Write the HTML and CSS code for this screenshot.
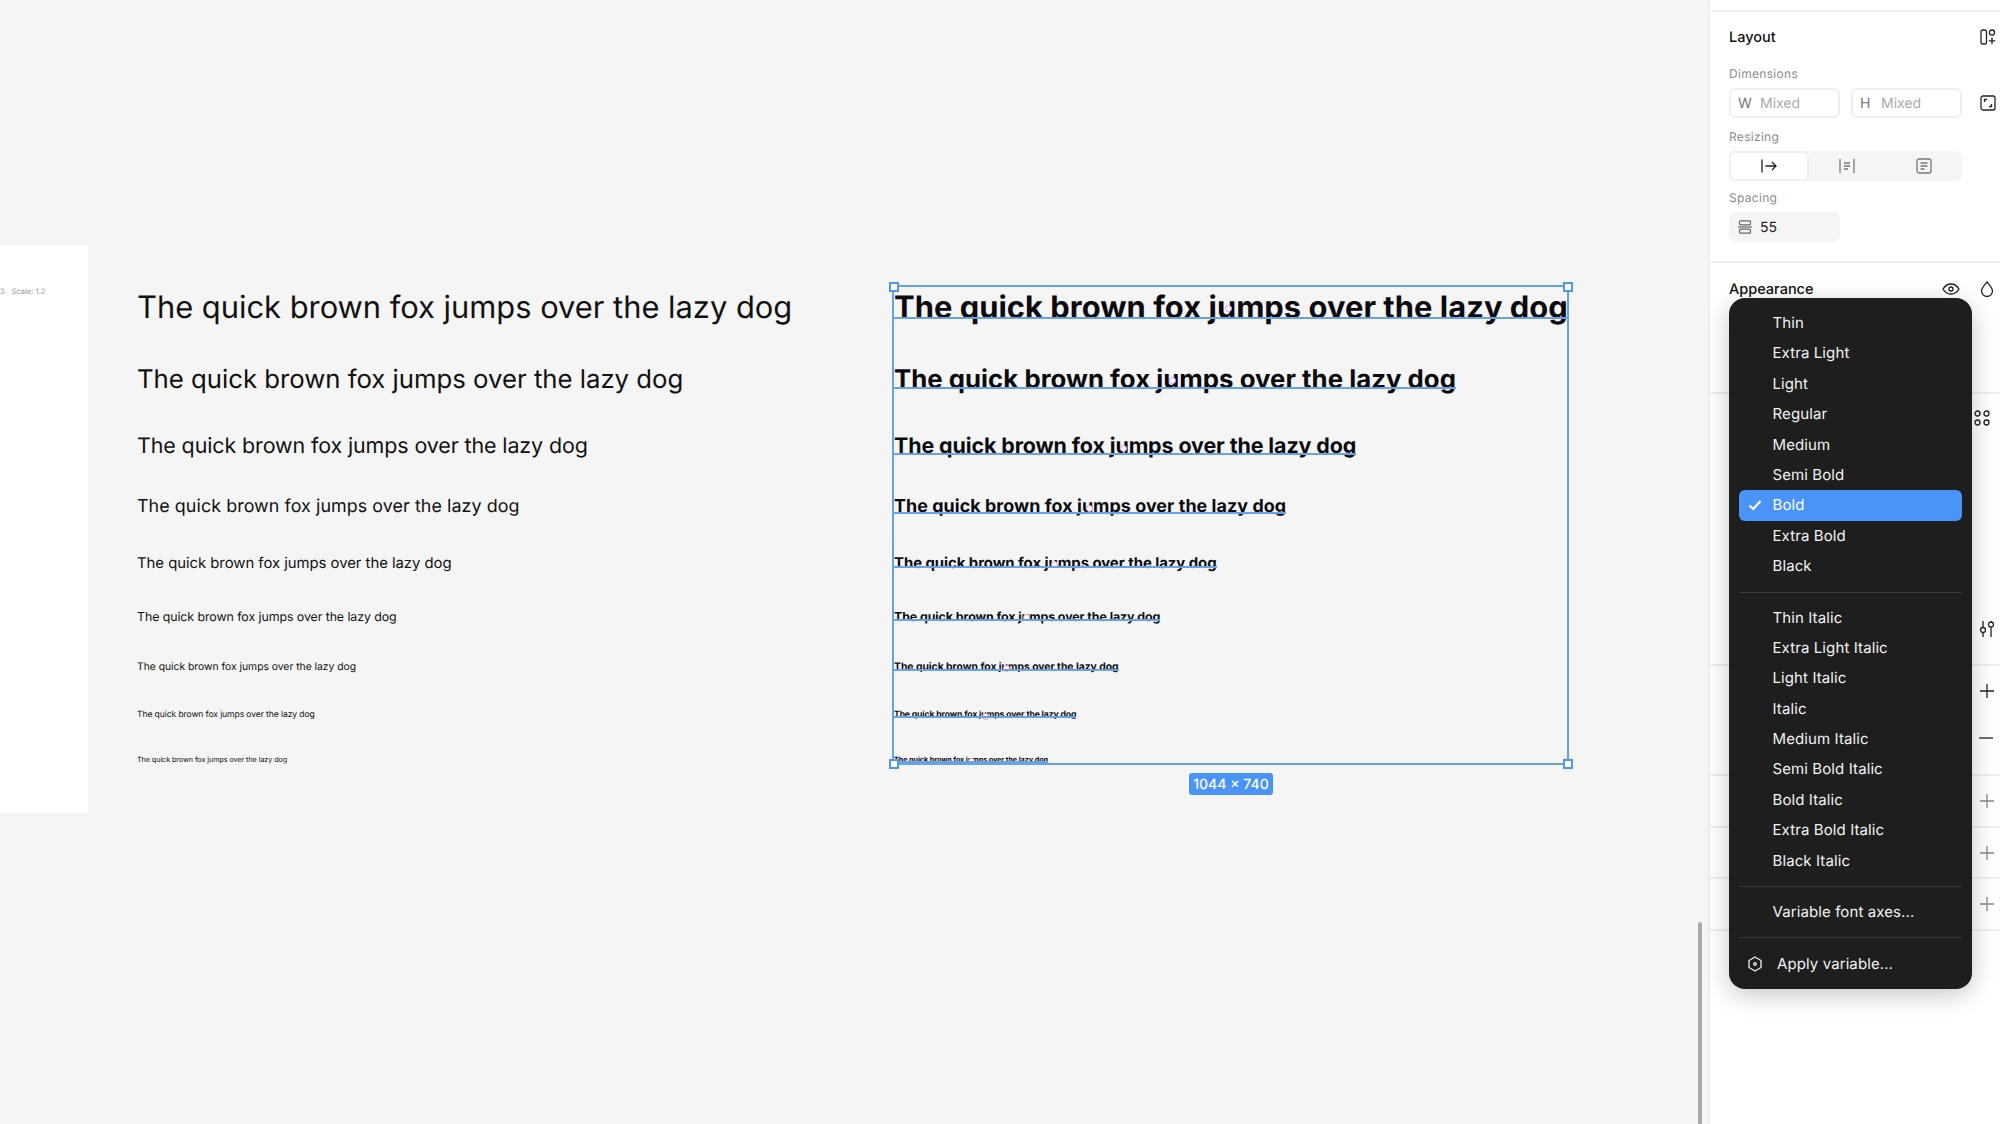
FILE: index.html
```html
<!DOCTYPE html>
<html lang="en">
<head>
<meta charset="utf-8">
<title>Type scale</title>
<link rel="stylesheet" href="styles.css">
</head>
<body>
<div class="app">
  <main class="canvas">
    <div class="frame"><div class="frame-note"><span>3</span><span>Scale: 1.2</span></div></div>
    <div class="stack stack-left">
      <p class="row s1">The quick brown fox jumps over the lazy dog</p>
      <p class="row s2">The quick brown fox jumps over the lazy dog</p>
      <p class="row s3">The quick brown fox jumps over the lazy dog</p>
      <p class="row s4">The quick brown fox jumps over the lazy dog</p>
      <p class="row s5">The quick brown fox jumps over the lazy dog</p>
      <p class="row s6">The quick brown fox jumps over the lazy dog</p>
      <p class="row s7">The quick brown fox jumps over the lazy dog</p>
      <p class="row s8">The quick brown fox jumps over the lazy dog</p>
      <p class="row s9">The quick brown fox jumps over the lazy dog</p>
    </div>
    <div class="stack stack-right">
      <p class="row s1"><span class="sel">The quick brown fox j<span class="dot">u</span>mps over the lazy dog</span></p>
      <p class="row s2"><span class="sel">The quick brown fox j<span class="dot">u</span>mps over the lazy dog</span></p>
      <p class="row s3"><span class="sel">The quick brown fox j<span class="dot">u</span>mps over the lazy dog</span></p>
      <p class="row s4"><span class="sel">The quick brown fox j<span class="dot">u</span>mps over the lazy dog</span></p>
      <p class="row s5"><span class="sel">The quick brown fox j<span class="dot">u</span>mps over the lazy dog</span></p>
      <p class="row s6"><span class="sel">The quick brown fox j<span class="dot">u</span>mps over the lazy dog</span></p>
      <p class="row s7"><span class="sel">The quick brown fox j<span class="dot">u</span>mps over the lazy dog</span></p>
      <p class="row s8"><span class="sel">The quick brown fox j<span class="dot">u</span>mps over the lazy dog</span></p>
      <p class="row s9"><span class="sel">The quick brown fox j<span class="dot">u</span>mps over the lazy dog</span></p>
    </div>
    <div class="selection">
      <i class="handle tl"></i><i class="handle tr"></i><i class="handle bl"></i><i class="handle br"></i>
      <span class="size-label">1044 × 740</span>
    </div>
    <div class="scrollbar"></div>
  </main>

  <aside class="panel">
    <section class="sec sec-top"></section>
    <section class="sec sec-layout">
      <header class="sec-head">
        <h2>Layout</h2>
        <svg class="ic ic-add" viewBox="0 0 16 16"><rect x="1" y="1" width="5.5" height="14" rx="1.6"/><circle cx="12" cy="3.6" r="2.6"/><path d="M12 8.6v6.4M8.8 11.8h6.4"/></svg>
      </header>
      <div class="label first">Dimensions</div>
      <div class="line">
        <div class="field outlined"><span class="pre">W</span><span class="ph">Mixed</span></div>
        <div class="field outlined"><span class="pre pre-h">H</span><span class="ph">Mixed</span></div>
        <svg class="ic ic-fit" viewBox="0 0 16 16"><rect x="1" y="1" width="14" height="14" rx="2"/><path d="M4.5 7V4.5H7M11.5 9v2.5H9"/></svg>
      </div>
      <div class="label">Resizing</div>
      <div class="segments">
        <div class="seg active"><svg viewBox="0 0 16 16"><path d="M1 1.500v13M4.500 8h10.500M11 4l4 4-4 4"/></svg></div>
        <div class="seg"><svg class="muted" viewBox="0 0 16 16"><path d="M1 1v14M15 1v14M5 5h6M5 8h6M5 11h4"/></svg></div>
        <div class="seg"><svg class="muted" viewBox="0 0 16 16"><rect x="1" y="1" width="14" height="14" rx="2"/><path d="M4.500 5h7M4.500 8h7M4.500 11h4"/></svg></div>
      </div>
      <div class="label">Spacing</div>
      <div class="field filled">
        <svg class="ic-space" viewBox="0 0 14 14"><rect x="1.500" y=".8" width="11" height="4" rx="1"/><rect x="1.500" y="9.200" width="11" height="4" rx="1"/><path d="M0 7h14"/></svg>
        <span class="val">55</span>
      </div>
    </section>
    <section class="sec sec-appearance">
      <header class="sec-head appearance-head">
        <h2>Appearance</h2>
        <svg class="ic ic-eye" viewBox="0 0 18 12"><path d="M1 6c2-3.400 4.800-5 8-5s6 1.600 8 5c-2 3.400-4.800 5-8 5S3 9.400 1 6z"/><circle cx="9" cy="6" r="2"/></svg>
        <svg class="ic ic-drop" viewBox="0 0 14 16"><path d="M7 1c2.800 3.400 5.500 6 5.500 9a5.500 5.500 0 0 1-11 0c0-3 2.700-5.600 5.500-9z"/></svg>
      </header>
    </section>
    <section class="sec sec-text">
      <svg class="ic ic-dots" viewBox="0 0 16 16"><circle cx="3.500" cy="3.500" r="2.500"/><circle cx="12.500" cy="3.500" r="2.500"/><circle cx="3.500" cy="12.500" r="2.500"/><circle cx="12.500" cy="12.500" r="2.500"/></svg>
      <svg class="ic ic-sliders" viewBox="0 0 16 16"><path d="M4 0v6.500M4 11.500V16M12 0v1M12 6v10"/><circle cx="4" cy="9" r="2.500"/><circle cx="12" cy="3.500" r="2.500"/></svg>
    </section>
    <section class="sec sec-fill">
      <svg class="ic ic-plus" viewBox="0 0 16 16"><path d="M8 1v14M1 8h14"/></svg>
      <svg class="ic ic-minus" viewBox="0 0 16 16"><path d="M1 8h14"/></svg>
    </section>
    <section class="sec sec-add"><svg class="ic ic-plus gray" viewBox="0 0 16 16"><path d="M8 1v14M1 8h14"/></svg></section>
    <section class="sec sec-add"><svg class="ic ic-plus gray" viewBox="0 0 16 16"><path d="M8 1v14M1 8h14"/></svg></section>
    <section class="sec sec-add"><svg class="ic ic-plus gray" viewBox="0 0 16 16"><path d="M8 1v14M1 8h14"/></svg></section>

    <div class="menu">
      <ul class="group">
        <li>Thin</li><li>Extra Light</li><li>Light</li><li>Regular</li><li>Medium</li><li>Semi Bold</li>
        <li class="on"><svg class="check" viewBox="0 0 14 12"><path d="M1.500 6.500l3.700 3.500L12.500 2"/></svg>Bold</li>
        <li>Extra Bold</li><li>Black</li>
      </ul>
      <ul class="group">
        <li>Thin Italic</li><li>Extra Light Italic</li><li>Light Italic</li><li>Italic</li><li>Medium Italic</li><li>Semi Bold Italic</li><li>Bold Italic</li><li>Extra Bold Italic</li><li>Black Italic</li>
      </ul>
      <ul class="group"><li>Variable font axes...</li></ul>
      <ul class="group">
        <li class="apply"><svg class="hex" viewBox="0 0 14 16"><path d="M7 1l6 3.500v7L7 15l-6-3.500v-7z"/><circle cx="7" cy="8" r="1.300"/></svg>Apply variable...</li>
      </ul>
    </div>
  </aside>
</div>
</body>
</html>
```

FILE: styles.css
```css
* { box-sizing: border-box; }
html, body { margin: 0; height: 100%; overflow: hidden; }
body { font-family: Inter, "Liberation Sans", sans-serif; color: #111; background: #f5f5f5; text-rendering: geometricPrecision; }
ul, p, h2 { margin: 0; padding: 0; }
ul { list-style: none; }

.app { display: flex; width: 2000px; height: 1124px; }

/* canvas */
.canvas { position: relative; flex: 0 0 1708px; background: #f5f5f5; overflow: hidden; }
.frame { position: absolute; left: 0; top: 245px; width: 88px; height: 568px; background: #fff; }
.frame-note { display: flex; gap: 7px; margin-top: 42px; font-size: 7.500px; color: #999; white-space: nowrap; }

.stack { position: absolute; top: 288.500px; display: flex; flex-direction: column; gap: 37px; }
.stack-left { left: 137px; }
.stack-right { left: 894px; font-weight: 700; }
.row { white-space: nowrap; color: #111; line-height: 1.21; }
.stack-right .row { color: #0b0b0f; }
.s1 { font-size: 30.900px; letter-spacing: -.02px; margin-bottom: 1px; }
.s2 { font-size: 25.750px; letter-spacing: -.015px; margin-bottom: 2px; }
.s3 { font-size: 21.450px; letter-spacing: -.106px; margin-bottom: -1px; }
.s4 { font-size: 17.880px; letter-spacing: .076px; margin-bottom: -1px; }
.s5 { font-size: 14.900px; letter-spacing: -.04px; }
.s6 { font-size: 12.420px; letter-spacing: -.09px; }
.s7 { font-size: 10.350px; letter-spacing: -.015px; margin-bottom: -.5px; }
.s8 { font-size: 8.620px; letter-spacing: -.121px; margin-bottom: -1px; }
.s9 { font-size: 7.180px; letter-spacing: -.05px; }
.stack-right .s1, .stack-right .s2 { letter-spacing: .03px; }

.sel { position: relative; display: inline-block; }
.sel::after { content: ""; position: absolute; left: -1px; right: 0; bottom: .22em; height: 2px; background: #66a3e6; }
.dot { position: relative; display: inline-block; }
.dot::after { content: ""; position: absolute; left: 50%; top: 50%; width: 5px; height: 5px; margin: -2px 0 0 -2px; border-radius: 50%; background: #fff; border: 1px solid #ea8fd0; }

.selection { position: absolute; left: 892px; top: 285px; width: 677px; height: 480px; border: 2px solid #66a3e6; pointer-events: none; }
.handle { position: absolute; width: 10px; height: 10px; background: #fff; border: 2px solid #4f97ea; }
.tl { left: -5px; top: -5px; }
.tr { right: -6px; top: -5px; }
.bl { left: -5px; bottom: -6px; }
.br { right: -6px; bottom: -6px; }
.size-label { position: absolute; left: 295px; top: 486px; width: 84px; height: 22px; line-height: 23px; text-align: center; font-size: 14px; font-weight: 500; color: #fff; background: #4a94f8; border-radius: 3px; white-space: nowrap; }

.scrollbar { position: absolute; left: 1698px; top: 922px; width: 4px; height: 202px; background: #aaa; border-radius: 2px 2px 0 0; }

/* panel */
.panel { position: relative; flex: 1; background: #fff; border-left: 2px solid #efefef; }
.sec { position: relative; border-bottom: 2px solid #efefef; padding-left: 19px; }
.sec-top { height: 12px; }
.sec-layout { height: 251px; }
.sec-appearance { height: 131px; }
.sec-text { height: 272px; }
.sec-fill { height: 110px; }
.sec-add { height: 51.500px; }

.sec-head { display: flex; align-items: center; }
.sec-layout .sec-head { padding-top: 15px; height: 35px; }
.appearance-head { padding-top: 16px; height: 36px; }
.sec-head h2 { flex: 1; font-size: 14.500px; font-weight: 500; color: #111; }

.ic { fill: none; stroke: #222; stroke-width: 1.300; }
.ic-add { width: 16px; height: 16px; margin-right: 4px; }
.ic-eye { width: 18px; height: 12px; margin-right: 20px; }
.ic-drop { width: 14px; height: 16px; margin-right: 6px; }

.label { font-size: 12px; line-height: 16px; color: #8b8b8b; letter-spacing: .3px; margin: 3px 0 6px; }
.label.first { margin-top: 19px; }

.line { display: flex; align-items: center; gap: 11px; margin-bottom: 11px; }
.field { display: flex; align-items: center; width: 111px; height: 30px; border-radius: 6px; font-size: 14px; }
.outlined { border: 2px solid #efefef; padding-left: 7px; }
.filled { background: #f5f5f5; padding-left: 9px; }
.pre { color: #777; width: 22px; }
.pre-h { width: 21px; }
.ph { color: #aaa; }
.ic-fit { width: 16px; height: 16px; margin-left: 7px; }

.segments { display: flex; width: 233px; height: 30px; background: #f5f5f5; border-radius: 6px; margin-bottom: 9px; }
.seg { flex: 1; display: flex; align-items: center; justify-content: center; }
.seg svg { width: 16px; height: 16px; fill: none; stroke: #222; stroke-width: 1.300; }
.seg svg.muted { stroke: #777; }
.seg.active { background: #fff; border: 2px solid #efefef; border-radius: 6px; }

.ic-space { width: 14px; height: 14px; fill: none; stroke: #666; stroke-width: 1.200; margin-right: 8px; }
.val { font-size: 14px; color: #222; }

.ic-dots { position: absolute; right: 10px; top: 16px; width: 16px; height: 16px; }
.ic-sliders { position: absolute; right: 5px; top: 227px; width: 16px; height: 16px; }
.ic-plus { position: absolute; right: 5px; top: 17px; width: 16px; height: 16px; }
.ic-minus { position: absolute; right: 6px; top: 64px; width: 16px; height: 16px; }
.gray { stroke: #888; }

/* font weight menu */
.menu { position: absolute; left: 19px; top: 298px; width: 243px; height: 691px; padding: 10px; background: #1e1e1e; border-radius: 16px; box-shadow: 0 6px 24px rgba(0, 0, 0, .22); color: #f2f2f2; }
.group { padding: 0 0 10px; margin-bottom: 10px; border-bottom: 1px solid #3a3a3a; }
.group:last-child { border: 0; margin: 0; padding: 0; }
.group li { position: relative; height: 30.400px; line-height: 30.400px; padding-left: 33.500px; font-size: 15px; letter-spacing: .1px; border-radius: 6px; white-space: nowrap; }
.group li.on { background: #4a94f8; color: #fff; }
.check { position: absolute; left: 9px; top: 9px; width: 14px; height: 12px; fill: none; stroke: #fff; stroke-width: 2.200; }
.group li.apply { padding-left: 38px; line-height: 32px; }
.hex { position: absolute; left: 9px; top: 8px; width: 14px; height: 16px; fill: none; stroke: #eee; stroke-width: 1.300; }
```
